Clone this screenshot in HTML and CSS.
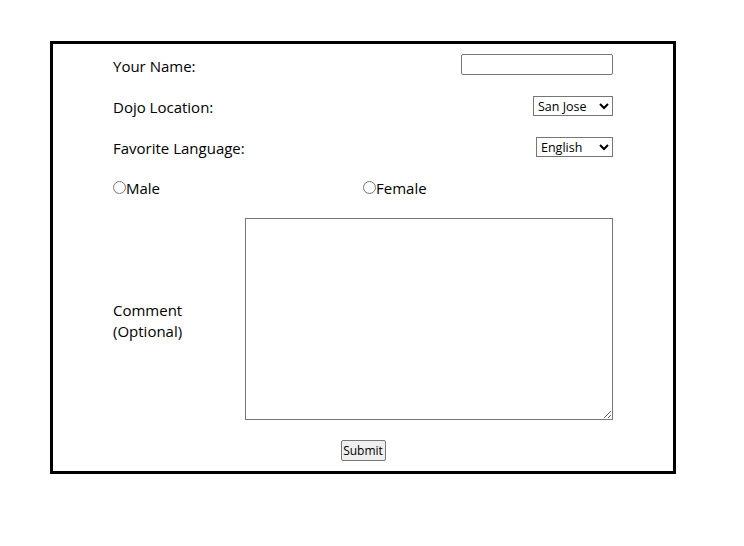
FILE: index.html
```html
<!DOCTYPE html>
<html>
<head>
<meta charset="utf-8">
<link rel="stylesheet" href="styles.css">
</head>
<body>
<form class="box">
  <div class="row">
    <label class="lbl" for="name">Your Name:</label>
    <input class="txt" id="name" type="text">
  </div>
  <div class="row">
    <label class="lbl" for="loc">Dojo Location:</label>
    <select class="sel sel-loc" id="loc"><option>San Jose</option><option>Seattle</option></select>
  </div>
  <div class="row">
    <label class="lbl" for="lang">Favorite Language:</label>
    <select class="sel sel-lang" id="lang"><option>English</option><option>Spanish</option></select>
  </div>
  <div class="row radios">
    <label class="half"><input class="rad" type="radio" name="g">Male</label>
    <label class="half"><input class="rad" type="radio" name="g">Female</label>
  </div>
  <div class="comment">
    <label class="clbl" for="cm">Comment<br>(Optional)</label>
    <textarea class="ta" id="cm"></textarea>
  </div>
  <div class="submit-row">
    <button class="btn" type="button">Submit</button>
  </div>
</form>
</body>
</html>
```
FILE: styles.css
```css
html, body { margin: 0; background: #fff; }
body {
  font-family: "Open Sans", "Noto Sans", sans-serif;
  font-size: 15px;
  color: #000;
  padding: 41px 0 0 50px;
}
.box {
  width: 500px;
  border: 3px solid #000;
  padding: 10px 60px 10px 60px;
  display: flex;
  flex-direction: column;
  gap: 20px;
}
.row {
  height: 21px;
  display: flex;
  align-items: center;
  justify-content: space-between;
}
.lbl { line-height: 21px; padding-top: 3px; }
.txt {
  box-sizing: border-box;
  width: 152px;
  height: 21px;
  margin: 0;
  border: 1px solid #767676;
  border-radius: 2px;
  font-size: 13px;
}
.sel {
  box-sizing: border-box;
  height: 20px;
  margin: 0;
  font-family: "Open Sans", sans-serif;
  font-size: 12.5px;
  border: 1px solid #767676;
  border-radius: 0;
  background: #fff;
}
.sel-loc { width: 80px; }
.sel-lang { width: 77px; }
.radios { justify-content: flex-start; }
.half {
  width: 250px;
  display: flex;
  align-items: center;
}
.rad {
  width: 13px;
  height: 13px;
  margin: 0;
}
.comment {
  display: flex;
  align-items: center;
  justify-content: space-between;
}
.clbl { line-height: 21px; padding-top: 4px; }
.ta {
  box-sizing: border-box;
  width: 368px;
  height: 202px;
  margin: 0;
  border: 1px solid #767676;
  border-radius: 0;
  resize: both;
}
.submit-row {
  display: flex;
  justify-content: center;
}
.btn {
  box-sizing: border-box;
  height: 21px;
  width: 45px;
  padding: 0;
  margin: 0;
  font-family: "Open Sans", sans-serif;
  font-size: 12px;
  border: 1px solid #767676;
  border-radius: 2px;
  background: #efefef;
  color: #000;
}
```
